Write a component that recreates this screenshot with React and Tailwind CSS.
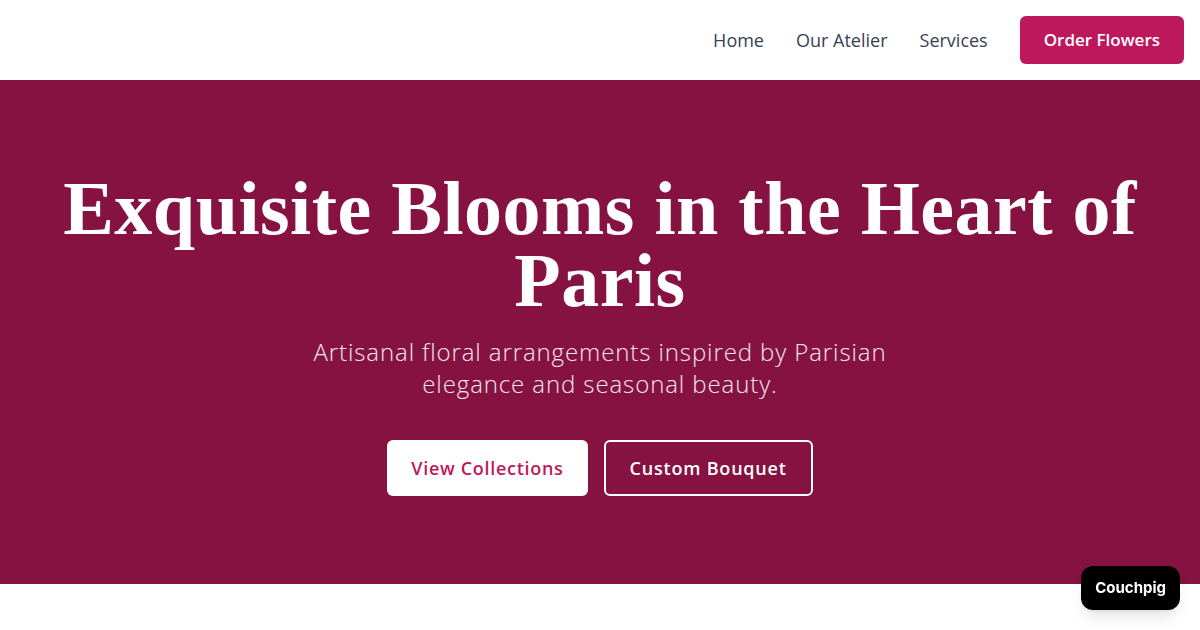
export default function App() {
  return (
    <div className="min-h-screen bg-white" style={{ fontFamily: '"Open Sans", sans-serif' }}>
      {/* Header */}
      <header className="h-20 bg-white">
        <div className="h-full flex items-center justify-end px-4">
          <nav className="flex items-center gap-8">
            <a className="text-lg text-gray-700">Home</a>
            <a className="text-lg text-gray-700">Our Atelier</a>
            <a className="text-lg text-gray-700">Services</a>
            <a className="px-6 py-2.5 rounded-md bg-[#be185d] text-white text-[17px] leading-7 font-semibold">Order Flowers</a>
          </nav>
        </div>
      </header>

      {/* Hero */}
      <section className="bg-[#861241] pt-20 pb-[88px]">
        <div className="max-w-6xl mx-auto px-6 text-center">
          <h1
            className="pt-3 text-[76px] leading-[72px] tracking-[0.5px] font-bold text-white"
            style={{ fontFamily: '"Liberation Serif", serif' }}
          >
            Exquisite Blooms in the Heart of Paris
          </h1>
          <p className="mt-5 max-w-2xl mx-auto text-2xl font-light tracking-[0.9px] text-white/90 leading-8">
            Artisanal floral arrangements inspired by Parisian elegance and seasonal beauty.
          </p>
          <div className="mt-10 flex justify-center gap-4">
            <a className="px-6 py-3.5 rounded-md bg-white text-[#be185d] text-lg tracking-[0.7px] font-semibold">View Collections</a>
            <a className="px-6 py-3 rounded-md border-2 border-white text-white text-lg tracking-[0.8px] font-semibold">Custom Bouquet</a>
          </div>
        </div>
      </section>

      {/* Badge */}
      <div className="fixed right-5 bottom-5 h-11 px-[14px] flex items-center rounded-xl bg-black text-white font-bold text-[15px] shadow-lg" style={{ fontFamily: 'Inter, sans-serif' }}>
        Couchpig
      </div>
    </div>
  )
}
